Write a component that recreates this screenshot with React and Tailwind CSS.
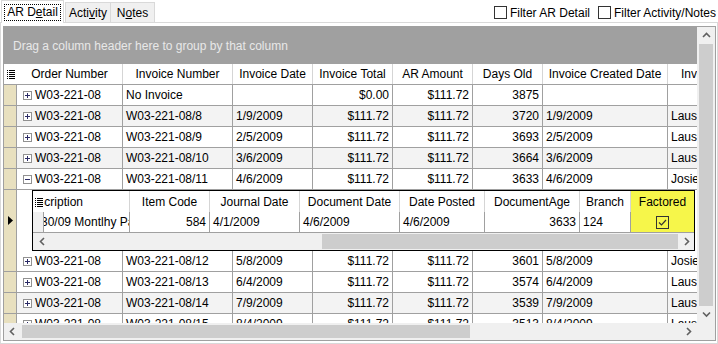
import React from "react";

const COLS = [
  { key: "order", w: "w-[106px]" },
  { key: "inv", w: "w-[110px]" },
  { key: "date", w: "w-[80px]" },
  { key: "total", w: "w-[80px]", right: true },
  { key: "ar", w: "w-[80px]", right: true },
  { key: "days", w: "w-[70px]", right: true },
  { key: "created", w: "w-[125px]" },
  { key: "by", w: "w-[29px]", last: true },
];

const HEADERS = [
  "Order Number",
  "Invoice Number",
  "Invoice Date",
  "Invoice Total",
  "AR Amount",
  "Days Old",
  "Invoice Created Date",
  "Invoice Created By",
];

const row = (inv, date, days, by, bg) => ({
  order: "W03-221-08",
  inv,
  date,
  total: "$111.72",
  ar: "$111.72",
  days,
  created: date,
  by,
  bg,
});

const TOP_ROWS = [
  { ...row("No Invoice", "", "3875", "", "bg-white"), total: "$0.00" },
  row("W03-221-08/8", "1/9/2009", "3720", "Lausanne", "bg-[#f3f3f3]"),
  row("W03-221-08/9", "2/5/2009", "3693", "Lausanne", "bg-white"),
  row("W03-221-08/10", "3/6/2009", "3664", "Lausanne", "bg-[#f3f3f3]"),
  { ...row("W03-221-08/11", "4/6/2009", "3633", "Josie", "bg-white"), open: true },
];

const BOTTOM_ROWS = [
  row("W03-221-08/12", "5/8/2009", "3601", "Josie", "bg-white"),
  row("W03-221-08/13", "6/4/2009", "3574", "Lausanne", "bg-white"),
  row("W03-221-08/14", "7/9/2009", "3539", "Lausanne", "bg-[#f3f3f3]"),
  row("W03-221-08/15", "8/4/2009", "3513", "Lausanne", "bg-white"),
];

function ColumnChooser() {
  return (
    <svg width="8" height="9" viewBox="0 0 8 9" className="shrink-0">
      {[0, 2, 4, 6, 8].map((y) => (
        <g key={y}>
          <rect x="0" y={y} width="1" height="1" fill="#000" />
          <rect x="2" y={y} width="6" height="1" fill="#000" />
        </g>
      ))}
    </svg>
  );
}

function Expander({ open }) {
  return (
    <svg width="9" height="9" viewBox="0 0 9 9" className="shrink-0">
      <rect x="0.5" y="0.5" width="8" height="8" fill="#fff" stroke="#919191" />
      <rect x="2" y="4" width="5" height="1" fill="#2b2b66" />
      {!open && <rect x="4" y="2" width="1" height="5" fill="#2b2b66" />}
    </svg>
  );
}

function Chevron({ dir }) {
  const d = {
    up: "M1 6 L4.5 2.5 L8 6",
    down: "M1 2.5 L4.5 6 L8 2.5",
    left: "M6 1 L2.5 4.5 L6 8",
    right: "M3 1 L6.5 4.5 L3 8",
  }[dir];
  return (
    <svg width="9" height="9" viewBox="0 0 9 9">
      <path d={d} fill="none" stroke="#606060" strokeWidth="1.6" />
    </svg>
  );
}

function HScroll({ trackW, thumbW }) {
  return (
    <div className="flex h-[17px] bg-[#f0f0f0]">
      <div className="flex w-[17px] shrink-0 items-center justify-center">
        <Chevron dir="left" />
      </div>
      <div className={`${trackW} shrink-0`} />
      <div className={`${thumbW} my-[2px] shrink-0 bg-[#cdcdcd]`} />
      <div className="flex-1" />
      <div className="flex w-[17px] shrink-0 items-center justify-center">
        <Chevron dir="right" />
      </div>
    </div>
  );
}

function GridRow({ r }) {
  return (
    <div className={`flex h-[21px] shrink-0 border-b border-[#a0a0a0] ${r.bg}`}>
      <div className="w-[13px] shrink-0 border-r border-[#a0a0a0] bg-[#e8e0bf]" />
      {COLS.map((c) => (
        <div
          key={c.key}
          className={`${c.w} flex shrink-0 items-center overflow-hidden whitespace-nowrap px-[3px] ${
            c.last ? "" : "border-r border-[#a0a0a0]"
          } ${c.right ? "justify-end" : ""}`}
        >
          {c.key === "order" ? (
            <div className="flex items-center pl-[3px]">
              <Expander open={r.open} />
              <span className="ml-[3px]">{r.order}</span>
            </div>
          ) : (
            r[c.key]
          )}
        </div>
      ))}
    </div>
  );
}

const DCOLS = [
  { key: "desc", w: "w-[86px]", head: "Description", val: "3/30/09 Montlhy Payment" },
  { key: "item", w: "w-[80px]", head: "Item Code", val: "584", right: true },
  { key: "jdate", w: "w-[90px]", head: "Journal Date", val: "4/1/2009" },
  { key: "ddate", w: "w-[100px]", head: "Document Date", val: "4/6/2009" },
  { key: "posted", w: "w-[85px]", head: "Date Posted", val: "4/6/2009" },
  { key: "age", w: "w-[95px]", head: "DocumentAge", val: "3633", right: true },
  { key: "branch", w: "w-[51px]", head: "Branch", val: "124" },
];

function DetailRow() {
  return (
    <div className="flex h-[61px] shrink-0 bg-white">
      <div className="flex w-[13px] shrink-0 items-center justify-center border-r border-[#a0a0a0] bg-[#e8e0bf]">
        <svg width="5" height="9" viewBox="0 0 5 9">
          <path d="M0 0 L5 4.5 L0 9 Z" fill="#000" />
        </svg>
      </div>
      <div className="w-[15px] shrink-0" />
      <div className="flex w-[663px] shrink-0 flex-col border border-black">
        <div className="flex h-[21px] shrink-0 bg-white">
          <div className="flex w-[11px] shrink-0 items-center justify-center pt-[1px]">
            <ColumnChooser />
          </div>
          {DCOLS.map((c) => (
            <div
              key={c.key}
              className={`${c.w} flex shrink-0 items-center overflow-hidden whitespace-nowrap border-r border-[#d5d5d5] ${
                c.key === "desc" ? "" : "justify-center"
              }`}
            >
              {c.key === "desc" ? <span className="ml-[-21px]">{c.head}</span> : c.head}
            </div>
          ))}
          <div className="flex w-[63px] shrink-0 items-center justify-center bg-[#f6f64a]">Factored</div>
        </div>
        <div className="flex h-[21px] shrink-0 border-b border-[#a0a0a0] bg-white">
          <div className="w-[11px] shrink-0 border-r border-[#a0a0a0] bg-[#f0f0f0]" />
          {DCOLS.map((c) => (
            <div
              key={c.key}
              className={`${c.w} flex shrink-0 items-center overflow-hidden whitespace-nowrap border-r border-[#a0a0a0] px-[3px] ${
                c.right ? "justify-end" : ""
              }`}
            >
              {c.key === "desc" ? <span className="ml-[-16px]">{c.val}</span> : c.val}
            </div>
          ))}
          <div className="flex w-[63px] shrink-0 items-center justify-center bg-[#f6f64a]">
            <svg width="13" height="13" viewBox="0 0 13 13">
              <rect x="0.5" y="0.5" width="12" height="12" fill="none" stroke="#333" />
              <path d="M3 6.5 L5.5 9 L10 4" fill="none" stroke="#333" strokeWidth="1.2" />
            </svg>
          </div>
        </div>
        <div className="flex h-[17px] bg-[#f0f0f0]">
          <div className="flex w-[14px] shrink-0 items-center justify-center pl-[4px]">
            <Chevron dir="left" />
          </div>
          <div className="w-[275px] shrink-0" />
          <div className="my-[1px] w-[356px] shrink-0 bg-[#cdcdcd]" />
          <div className="flex flex-1 items-center justify-center">
            <Chevron dir="right" />
          </div>
        </div>
      </div>
    </div>
  );
}

function Checkbox({ label }) {
  return (
    <div className="flex items-center">
      <div className="h-[13px] w-[13px] border border-[#333] bg-white" />
      <span className="ml-[3px]">{label}</span>
    </div>
  );
}

export default function App() {
  return (
    <div className="h-[344px] w-[718px] overflow-hidden bg-white text-[12px] leading-none text-black [font-family:'Liberation_Sans',Arial,sans-serif]">
      <div className="flex h-[22px] items-end">
        <div className="relative z-10 mb-[-1px] ml-[1px] flex h-[23px] w-[63px] items-center justify-center border border-b-0 border-[#d9d9d9] bg-white">
          <div className="flex h-[17px] items-center border border-dotted border-black px-[2px]">
            AR D<span className="underline">e</span>tail
          </div>
        </div>
        <div className="ml-[1px] flex h-[20px] w-[46px] items-center justify-center border border-b-0 border-[#d9d9d9] bg-[#f0f0f0]">
          Acti<span className="underline">v</span>ity
        </div>
        <div className="flex h-[20px] w-[44px] items-center justify-center border border-b-0 border-l-0 border-[#d9d9d9] bg-[#f0f0f0]">
          N<span className="underline">o</span>tes
        </div>
        <div className="ml-auto mr-[2px] flex gap-[8px] self-center pt-[3px]">
          <Checkbox label="Filter AR Detail" />
          <Checkbox label="Filter Activity/Notes" />
        </div>
      </div>

      <div className="h-[322px] border border-[#d9d9d9] pb-[2px] pl-[2px] pr-[1px] pt-[3px]">
        <div className="flex h-full border border-[#a0a0a0]">
          <div className="flex w-[693px] shrink-0 flex-col">
            <div className="flex h-[37px] shrink-0 items-center bg-[#a0a0a0] pl-[9px] text-[#e8e8e8]">
              Drag a column header here to group by that column
            </div>
            <div className="flex h-[21px] shrink-0 border-b border-[#a0a0a0] bg-white">
              <div className="flex w-[13px] shrink-0 items-center justify-center">
                <ColumnChooser />
              </div>
              {COLS.map((c, i) => (
                <div
                  key={c.key}
                  className={`${c.w} flex shrink-0 items-center overflow-hidden whitespace-nowrap ${
                    c.last ? "pl-[13px]" : "justify-center border-r border-[#d5d5d5]"
                  }`}
                >
                  {HEADERS[i]}
                </div>
              ))}
            </div>
            <div className="flex flex-1 flex-col overflow-hidden">
              {TOP_ROWS.map((r) => (
                <GridRow key={r.inv} r={r} />
              ))}
              <DetailRow />
              {BOTTOM_ROWS.map((r) => (
                <GridRow key={r.inv} r={r} />
              ))}
            </div>
            <HScroll trackW="w-[1px]" thumbW="w-[448px]" />
          </div>
          <div className="flex w-[18px] shrink-0 flex-col bg-[#f0f0f0]">
            <div className="flex h-[17px] shrink-0 items-center justify-center">
              <Chevron dir="up" />
            </div>
            <div className="mx-[2px] flex-1 bg-[#cdcdcd]" />
            <div className="flex h-[17px] shrink-0 items-center justify-center">
              <Chevron dir="down" />
            </div>
            <div className="h-[17px] shrink-0" />
          </div>
        </div>
      </div>
    </div>
  );
}
